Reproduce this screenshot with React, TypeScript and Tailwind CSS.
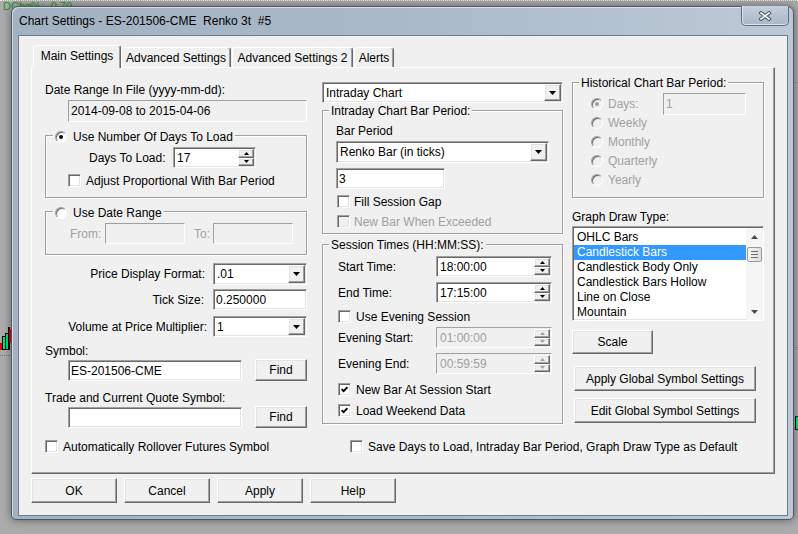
import React from 'react';

// classic 3D borders
const sunken =
  'border border-t-[#a0a0a0] border-l-[#a0a0a0] border-b-white border-r-white shadow-[inset_1px_1px_0_#696969,inset_-1px_-1px_0_#e3e3e3]';
const raised =
  'border border-t-white border-l-white border-b-[#696969] border-r-[#696969] shadow-[inset_-1px_-1px_0_#a0a0a0,inset_1px_1px_0_#e3e3e3]';
const flat = 'border border-t-[#a0a0a0] border-l-[#a0a0a0] border-b-white border-r-white';
const grayText = 'text-[#a0a0a0]';

const Tri: React.FC<{ up?: boolean; w?: number; h?: number; color?: string }> = ({
  up,
  w = 7,
  h = 4,
  color = '#000',
}) => (
  <svg width={w} height={h} viewBox={`0 0 ${w} ${h}`}>
    <path d={up ? `M0 ${h}H${w}L${w / 2} 0Z` : `M0 0H${w}L${w / 2} ${h}Z`} fill={color} />
  </svg>
);

const TextBox: React.FC<{ value?: string; className?: string; disabled?: boolean }> = ({
  value = '',
  className = '',
  disabled,
}) => (
  <div
    className={`${disabled ? `${flat} bg-[#f0f0f0] ${grayText}` : `${sunken} bg-white`} flex items-center pl-[2px] shrink-0 ${className}`}
  >
    {value}
  </div>
);

const Combo: React.FC<{ value: string; className?: string }> = ({ value, className = '' }) => (
  <div className={`${sunken} bg-white flex p-[1px] shrink-0 ${className}`}>
    <div className="flex-1 flex items-center pl-[2px]">{value}</div>
    <div className={`${raised} w-[17px] bg-[#f0f0f0] flex items-center justify-center`}>
      <Tri />
    </div>
  </div>
);

const Spin: React.FC<{ value: string; className?: string; disabled?: boolean }> = ({
  value,
  className = '',
  disabled,
}) => {
  const c = disabled ? '#a0a0a0' : '#000';
  return (
    <div
      className={`${disabled ? `${flat} bg-[#f0f0f0] ${grayText}` : `${sunken} bg-white`} flex p-[1px] shrink-0 ${className}`}
    >
      <div className="flex-1 flex items-center pl-[2px]">{value}</div>
      <div className="w-[16px] flex flex-col">
        <div className={`${raised} flex-1 bg-[#f0f0f0] flex items-center justify-center`}>
          <Tri up w={5} h={3} color={c} />
        </div>
        <div className={`${raised} flex-1 bg-[#f0f0f0] flex items-center justify-center`}>
          <Tri w={5} h={3} color={c} />
        </div>
      </div>
    </div>
  );
};

const Check: React.FC<{ checked?: boolean; disabled?: boolean }> = ({ checked, disabled }) => (
  <div
    className={`w-[13px] h-[13px] shrink-0 ${sunken} ${disabled ? 'bg-[#f0f0f0]' : 'bg-white'} flex items-center justify-center`}
  >
    {checked && (
      <svg width="7" height="7" viewBox="0 0 7 7">
        <path d="M0.6 3.2L2.6 5.2L6.4 1.2" stroke="#000" strokeWidth="1.8" fill="none" />
      </svg>
    )}
  </div>
);

const CheckRow: React.FC<{
  label: string;
  checked?: boolean;
  disabled?: boolean;
  className?: string;
}> = ({ label, checked, disabled, className = '' }) => (
  <div className={`flex items-center h-[13px] ${className}`}>
    <Check checked={checked} disabled={disabled} />
    <span className={disabled ? grayText : ''}>{label}</span>
  </div>
);

const Radio: React.FC<{ checked?: boolean; disabled?: boolean }> = ({ checked, disabled }) => (
  <div
    className={`w-[12px] h-[12px] shrink-0 rounded-full border border-t-[#a0a0a0] border-l-[#a0a0a0] border-b-white border-r-white shadow-[inset_1px_1px_0_#696969] ${disabled ? 'bg-[#f0f0f0]' : 'bg-white'} flex items-center justify-center`}
  >
    {checked && (
      <div className={`w-[4px] h-[4px] rounded-full ${disabled ? 'bg-[#a0a0a0]' : 'bg-black'}`} />
    )}
  </div>
);

const Group: React.FC<{
  legend: React.ReactNode;
  legendClass: string;
  className?: string;
  children?: React.ReactNode;
}> = ({ legend, legendClass, className = '', children }) => (
  <div
    className={`relative shrink-0 border border-[#a0a0a0] shadow-[inset_1px_1px_0_#fff,1px_1px_0_#fff] flex flex-col ${className}`}
  >
    <div className={`absolute h-[14px] px-[2px] bg-[#f0f0f0] flex items-center ${legendClass}`}>
      {legend}
    </div>
    {children}
  </div>
);

const Btn: React.FC<{ className?: string; children?: React.ReactNode }> = ({
  className = '',
  children,
}) => (
  <div className={`${raised} shrink-0 bg-[#f0f0f0] flex items-center justify-center ${className}`}>
    {children}
  </div>
);

const drawTypes = [
  'OHLC Bars',
  'Candlestick Bars',
  'Candlestick Body Only',
  'Candlestick Bars Hollow',
  'Line on Close',
  'Mountain',
];

const tabs = [
  { label: 'Advanced Settings', w: 'w-[110px]' },
  { label: 'Advanced Settings 2', w: 'w-[121px] ml-[1px]' },
  { label: 'Alerts', w: 'w-[40px] ml-[1px]' },
];

export default function App() {
  return (
    <div className="relative w-[798px] h-[534px] overflow-hidden bg-[#ababab] pt-[6px] pl-[11px] font-['Liberation_Sans',Arial,sans-serif] text-[12px] leading-[14px] text-black">
      {/* chart behind the dialog */}
      <div className="absolute left-0 top-0 w-full h-[2px] border-t border-dotted border-[#e8e8e8]" />
      <div className="absolute left-[3px] top-[1px] text-[11px] leading-[11px] text-[#1a9a1a]">DChg%: -0.79</div>
      <div className="absolute left-0 top-[343px] w-[2px] h-[7px] bg-[#e00000]" />
      <div className="absolute left-[2px] top-[336px] w-[4px] h-[14px] bg-[#00e676] border border-black" />
      <div className="absolute left-[5px] top-[333px] w-[4px] h-[17px] bg-[#00e676] border border-black" />
      <div className="absolute left-[8px] top-[327px] w-[2px] h-[23px] bg-black" />
      <div className="absolute left-[9px] top-[329px] w-[2px] h-[14px] bg-[#e00000]" />
      <div className="absolute left-0 top-[355px] w-[11px] h-[1px] border-t border-dotted border-[#777]" />
      <div className="absolute left-[795px] top-[82px] w-[3px] h-[1px] bg-[#8a8a8a]" />
      <div className="absolute left-[795px] top-[347px] w-[3px] h-[1px] bg-[#8a8a8a]" />
      <div className="absolute left-[795px] top-[416px] w-[4px] h-[14px] bg-[#00e676] border border-black" />

      {/* dialog window */}
      <div className="relative z-10 w-[783px] h-[514px] rounded-t-[7px] rounded-b-[5px] border border-[#4c5866] bg-linear-to-r from-[#a3b2c3] via-[#aab9c9] to-[#bccad7] shadow-[0_0_8px_rgba(0,0,0,0.45),inset_1px_1px_0_rgba(255,255,255,0.55)] flex flex-col">
        <div className="h-[28px] flex shrink-0">
          <span className="self-center pl-[7px] text-[12px]">Chart Settings - ES-201506-CME&nbsp; Renko 3t&nbsp; #5</span>
          <div className="ml-auto mr-[4px] -mt-px w-[48px] h-[20px] rounded-b-[5px] border border-t-0 border-[#5d6b7d] bg-linear-to-b from-[#c3cfdb] to-[#a9b8c8] shadow-[inset_0_-1px_0_rgba(255,255,255,0.6),inset_1px_0_0_rgba(255,255,255,0.5)] flex items-center justify-center">
            <svg width="14" height="10" viewBox="0 0 14 10">
              <path d="M3 2L11 8M11 2L3 8" stroke="#3f4c5c" strokeWidth="3.6" strokeLinecap="square" fill="none" />
              <path d="M3 2L11 8M11 2L3 8" stroke="#fff" strokeWidth="1.7" strokeLinecap="square" fill="none" />
            </svg>
          </div>
        </div>

        {/* client area */}
        <div className="ml-[6px] w-[770px] h-[481px] border border-[#6d7b8b] bg-[#f0f0f0] pt-[9px] flex flex-col">
          {/* tabs */}
          <div className="ml-[14px] flex items-end h-[22px]">
            <div className="relative z-10 w-[88px] h-[23px] -mb-px bg-[#f0f0f0] border border-b-0 border-t-white border-l-white border-r-[#696969] rounded-t-[3px] shadow-[inset_-1px_0_0_#a0a0a0] flex justify-center pt-[3px]">
              Main Settings
            </div>
            {tabs.map((t) => (
              <div
                key={t.label}
                className={`${t.w} h-[20px] bg-[#f0f0f0] border border-b-0 border-t-white border-l-white border-r-[#696969] rounded-t-[3px] shadow-[inset_-1px_0_0_#a0a0a0] flex justify-center pt-[3px]`}
              >
                {t.label}
              </div>
            ))}
          </div>

          {/* tab panel */}
          <div className="ml-[12px] w-[744px] h-[407px] border border-t-white border-l-white border-r-[#696969] border-b-[#696969] shadow-[inset_-1px_-1px_0_#a0a0a0] pl-[13px] pt-[14px] flex flex-col">
            <div className="flex items-start h-[358px]">
              {/* left column */}
              <div className="w-[262px] flex flex-col">
                <div className="mt-[1px] h-[14px]">Date Range In File (yyyy-mm-dd):</div>
                <div className={`ml-[23px] mt-[3px] w-[239px] h-[22px] ${flat} bg-[#f0f0f0] flex items-center pl-[2px]`}>
                  2014-09-08 to 2015-04-06
                </div>

                <Group
                  className="mt-[13px] h-[63px] pt-[11px]"
                  legendClass="top-[-6px] left-[7px] gap-[6px]"
                  legend={
                    <>
                      <Radio checked />
                      <span>Use Number Of Days To Load</span>
                    </>
                  }
                >
                  <div className="ml-[43px] h-[21px] flex items-center">
                    <span className="w-[84px]">Days To Load:</span>
                    <Spin value="17" className="w-[83px] h-[21px]" />
                  </div>
                  <CheckRow className="mt-[6px] ml-[22px] gap-[5px]" label="Adjust Proportional With Bar Period" />
                </Group>

                <Group
                  className="mt-[13px] h-[44px] pt-[11px]"
                  legendClass="top-[-6px] left-[7px] gap-[6px]"
                  legend={
                    <>
                      <Radio />
                      <span>Use Date Range</span>
                    </>
                  }
                >
                  <div className="ml-[24px] h-[21px] flex items-center">
                    <span className={`w-[35px] ${grayText}`}>From:</span>
                    <TextBox disabled className="w-[80px] h-[21px]" />
                    <span className={`ml-[9px] w-[19px] ${grayText}`}>To:</span>
                    <TextBox disabled className="w-[80px] h-[21px]" />
                  </div>
                </Group>

                <div className="mt-[8px] h-[22px] flex items-center justify-end">
                  <span>Price Display Format:</span>
                  <Combo value=".01" className="ml-[8px] w-[94px] h-[22px]" />
                </div>
                <div className="mt-[4px] h-[21px] flex items-center justify-end">
                  <span>Tick Size:</span>
                  <TextBox value="0.250000" className="ml-[9px] w-[94px] h-[21px]" />
                </div>
                <div className="mt-[6px] h-[21px] flex items-center justify-end">
                  <span>Volume at Price Multiplier:</span>
                  <Combo value="1" className="ml-[6px] w-[94px] h-[21px]" />
                </div>

                <div className="mt-[7px] h-[14px]">Symbol:</div>
                <div className="mt-[1px] ml-[23px] flex items-start">
                  <TextBox value="ES-201506-CME" className="mt-[1px] w-[174px] h-[21px]" />
                  <Btn className="ml-[13px] w-[52px] h-[22px]">Find</Btn>
                </div>

                <div className="mt-[10px] h-[14px]">Trade and Current Quote Symbol:</div>
                <div className="mt-[1px] ml-[23px] flex items-start">
                  <TextBox className="mt-[1px] w-[174px] h-[21px]" />
                  <Btn className="ml-[13px] w-[52px] h-[22px]">Find</Btn>
                </div>
              </div>

              {/* middle column */}
              <div className="ml-[15px] w-[241px] flex flex-col">
                <Combo value="Intraday Chart" className="h-[21px]" />

                <Group
                  className="mt-[7px] h-[124px] pt-[13px] pl-[13px]"
                  legendClass="top-[-7px] left-[6px]"
                  legend="Intraday Chart Bar Period:"
                >
                  <div className="h-[14px]">Bar Period</div>
                  <Combo value="Renko Bar (in ticks)" className="mt-[3px] w-[213px] h-[22px]" />
                  <TextBox value="3" className="mt-[5px] w-[109px] h-[21px]" />
                  <CheckRow className="mt-[6px] ml-[1px] gap-[4px]" label="Fill Session Gap" />
                  <CheckRow className="mt-[7px] ml-[1px] gap-[4px]" label="New Bar When Exceeded" disabled />
                </Group>

                <Group
                  className="mt-[10px] h-[180px] pt-[11px] pl-[15px]"
                  legendClass="top-[-7px] left-[6px]"
                  legend="Session Times (HH:MM:SS):"
                >
                  <div className="h-[21px] flex items-center">
                    <span className="w-[98px]">Start Time:</span>
                    <Spin value="18:00:00" className="w-[116px] h-[21px]" />
                  </div>
                  <div className="mt-[5px] h-[21px] flex items-center">
                    <span className="w-[98px]">End Time:</span>
                    <Spin value="17:15:00" className="w-[116px] h-[21px]" />
                  </div>
                  <CheckRow className="mt-[7px] gap-[5px]" label="Use Evening Session" />
                  <div className="mt-[4px] h-[21px] flex items-center">
                    <span className="w-[98px]">Evening Start:</span>
                    <Spin value="01:00:00" disabled className="w-[116px] h-[21px]" />
                  </div>
                  <div className="mt-[5px] h-[21px] flex items-center">
                    <span className="w-[98px]">Evening End:</span>
                    <Spin value="00:59:59" disabled className="w-[116px] h-[21px]" />
                  </div>
                  <CheckRow className="mt-[9px] gap-[5px]" label="New Bar At Session Start" checked />
                  <CheckRow className="mt-[8px] gap-[5px]" label="Load Weekend Data" checked />
                </Group>
              </div>

              {/* right column */}
              <div className="ml-[9px] w-[192px] flex flex-col">
                <Group
                  className="h-[116px] pt-[11px] pl-[18px]"
                  legendClass="top-[-7px] left-[6px]"
                  legend="Historical Chart Bar Period:"
                >
                  <div className="h-[19px] flex items-center">
                    <Radio checked disabled />
                    <span className={`ml-[5px] w-[55px] ${grayText}`}>Days:</span>
                    <TextBox value="1" disabled className="w-[83px] h-[22px]" />
                  </div>
                  {['Weekly', 'Monthly', 'Quarterly', 'Yearly'].map((p) => (
                    <div key={p} className="h-[19px] flex items-center">
                      <Radio disabled />
                      <span className={`ml-[5px] ${grayText}`}>{p}</span>
                    </div>
                  ))}
                </Group>

                <div className="mt-[12px] h-[14px]">Graph Draw Type:</div>
                <div className={`mt-[2px] h-[95px] shrink-0 ${sunken} bg-white flex pl-[1px] pt-[1px]`}>
                  <div className="flex-1 flex flex-col pt-[2px]">
                    {drawTypes.map((t, i) => (
                      <div
                        key={t}
                        className={`h-[15px] leading-[15px] pl-[3px] ${i === 1 ? 'bg-[#3399ff] text-white' : ''}`}
                      >
                        {t}
                      </div>
                    ))}
                  </div>
                  <div className="w-[17px] bg-[#f5f5f5] flex flex-col items-center">
                    <div className="h-[18px] flex items-center justify-center">
                      <Tri up w={7} h={4} color="#4a4a4a" />
                    </div>
                    <div className="mt-[1px] w-[15px] h-[15px] rounded-[2px] border border-[#9a9a9a] bg-linear-to-r from-[#f6f6f6] to-[#dedede] flex flex-col items-center justify-center gap-[2px]">
                      <div className="w-[7px] h-[1px] bg-[#6f6f6f]" />
                      <div className="w-[7px] h-[1px] bg-[#6f6f6f]" />
                      <div className="w-[7px] h-[1px] bg-[#6f6f6f]" />
                    </div>
                    <div className="flex-1" />
                    <div className="h-[17px] flex items-center justify-center">
                      <Tri w={7} h={4} color="#4a4a4a" />
                    </div>
                  </div>
                </div>

                <Btn className="mt-[9px] w-[81px] h-[24px]">Scale</Btn>
                <Btn className="mt-[12px] ml-[2px] w-[182px] h-[25px]">Apply Global Symbol Settings</Btn>
                <Btn className="mt-[7px] ml-[2px] w-[182px] h-[25px]">Edit Global Symbol Settings</Btn>
              </div>
            </div>

            {/* bottom options */}
            <div className="h-[13px] flex items-center">
              <CheckRow className="w-[305px] gap-[5px]" label="Automatically Rollover Futures Symbol" />
              <CheckRow className="gap-[5px]" label="Save Days to Load, Intraday Bar Period, Graph Draw Type as Default" />
            </div>
          </div>

          {/* dialog buttons */}
          <div className="ml-[12px] mt-[4px] flex gap-[7px]">
            {['OK', 'Cancel', 'Apply', 'Help'].map((b) => (
              <Btn key={b} className="w-[86px] h-[25px]">
                {b}
              </Btn>
            ))}
          </div>
        </div>
      </div>
    </div>
  );
}
